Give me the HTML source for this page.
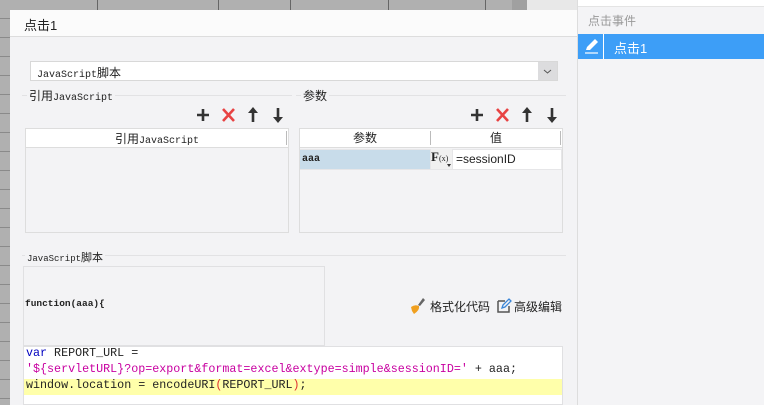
<!DOCTYPE html>
<html><head><meta charset="utf-8"><style>
*{margin:0;padding:0;box-sizing:border-box}
body{width:764px;height:405px;overflow:hidden;position:relative;background:#f3f3f5;font-family:"Liberation Sans","Noto Sans CJK SC",sans-serif;font-size:12px;color:#222}
.a{position:absolute}
.serif{font-family:"Liberation Mono","Noto Serif CJK SC",monospace;font-size:10px}
.serif b{font-family:"Noto Sans CJK SC",sans-serif;font-weight:normal;font-size:12px}
.mono{font-family:"Liberation Mono","Noto Sans CJK SC",monospace}
.vl{position:absolute;top:0;width:1px;height:10px;background:#666}
.hl{position:absolute;left:0;width:10px;height:1px;background:#8a8a8a}
</style></head><body>
<div class="a" style="left:0;top:0;width:577px;height:10px;background:#b0b0b0"></div>
<div class="a" style="left:512px;top:0;width:15px;height:10px;background:#a0a0a0"></div>
<div class="a" style="left:527px;top:0;width:50px;height:10px;background:#e8e8e8"></div>
<div class="vl" style="left:97px"></div><div class="vl" style="left:218px"></div><div class="vl" style="left:290px"></div><div class="vl" style="left:388px"></div><div class="vl" style="left:485px"></div>
<div class="a" style="left:0;top:0;width:10px;height:405px;background:#b0b0b0"></div>
<div class="hl" style="top:18px"></div><div class="hl" style="top:37px"></div><div class="hl" style="top:56px"></div><div class="hl" style="top:75px"></div><div class="hl" style="top:94px"></div><div class="hl" style="top:113px"></div><div class="hl" style="top:132px"></div><div class="hl" style="top:151px"></div><div class="hl" style="top:170px"></div><div class="hl" style="top:189px"></div><div class="hl" style="top:208px"></div><div class="hl" style="top:227px"></div><div class="hl" style="top:246px"></div><div class="hl" style="top:265px"></div><div class="hl" style="top:284px"></div><div class="hl" style="top:303px"></div><div class="hl" style="top:322px"></div><div class="hl" style="top:341px"></div><div class="hl" style="top:360px"></div><div class="hl" style="top:379px"></div><div class="hl" style="top:398px"></div>
<div class="a" style="left:10px;top:10px;width:567px;height:395px;background:#f3f3f5"></div>
<div class="a" style="left:10px;top:10px;width:567px;height:27px;background:#fbfbfb;border-bottom:1px solid #ddd"></div>
<div class="a" style="left:24px;top:15px;font-size:13px">点击1</div>
<div class="a" style="left:30px;top:61px;width:528px;height:20px;background:#fff;border:1px solid #d8d8d8"></div>
<div class="a serif" style="left:37px;top:64px">JavaScript<b>脚本</b></div>
<svg class="a" style="left:538px;top:62px" width="19" height="18"><rect width="19" height="18" fill="#dcdcde"/><path d="M6 8l3.5 3 3.5-3" stroke="#555" fill="none"/></svg>
<div class="a" style="left:22px;top:95px;width:270px;height:1px;background:#e2e2e4"></div>
<div class="a serif" style="left:27px;top:87px;background:#f3f3f5;padding:0 2px"><b>引用</b>JavaScript</div>
<div class="a" style="left:296px;top:95px;width:270px;height:1px;background:#e2e2e4"></div>
<div class="a" style="left:301px;top:87px;background:#f3f3f5;padding:0 2px;font-size:12px">参数</div>
<svg class="a" style="left:195px;top:107px" width="95" height="16"><g stroke="#333" stroke-width="2.6" fill="none"><path d="M8 2v12M2 8h12"/><path d="M58 3v12M83 1v12"/></g><g fill="#333"><path d="M58 0l5 6h-10z"/><path d="M83 16l5-6h-10z"/></g><path d="M28 2l11 12M39 2l-11 12" stroke="#e84343" stroke-width="2.6"/></svg>
<svg class="a" style="left:469px;top:107px" width="95" height="16"><g stroke="#333" stroke-width="2.6" fill="none"><path d="M8 2v12M2 8h12"/><path d="M58 3v12M83 1v12"/></g><g fill="#333"><path d="M58 0l5 6h-10z"/><path d="M83 16l5-6h-10z"/></g><path d="M28 2l11 12M39 2l-11 12" stroke="#e84343" stroke-width="2.6"/></svg>
<div class="a" style="left:25px;top:128px;width:264px;height:105px;border:1px solid #ddd"></div>
<div class="a serif" style="left:26px;top:129px;width:262px;height:19px;background:#fff;border-bottom:1px solid #ddd;text-align:center;line-height:19px"><b>引用</b>JavaScript</div>
<div class="a" style="left:286px;top:131px;width:1px;height:14px;background:#bbb"></div>
<div class="a" style="left:299px;top:128px;width:264px;height:105px;border:1px solid #ddd"></div>
<div class="a" style="left:300px;top:129px;width:262px;height:19px;background:#fff;border-bottom:1px solid #ddd"></div>
<div class="a" style="left:300px;top:129px;width:130px;text-align:center;line-height:19px">参数</div>
<div class="a" style="left:430px;top:131px;width:1px;height:14px;background:#bbb"></div>
<div class="a" style="left:431px;top:129px;width:130px;text-align:center;line-height:19px">值</div>
<div class="a" style="left:560px;top:131px;width:1px;height:14px;background:#bbb"></div>
<div class="a" style="left:300px;top:149px;width:262px;height:21px;background:#e6e6e8"></div>
<div class="a serif" style="left:300px;top:150px;width:130px;height:19px;background:#c8dcea;font-weight:bold;line-height:19px;padding-left:2px">aaa</div>
<div class="a" style="left:431px;top:149px;width:21px;height:20px;background:#f0f0f0;font-family:'Liberation Serif',serif;font-size:13px;font-weight:bold">F<span style="font-size:8px;font-weight:normal">(x)</span></div>
<div class="a" style="left:447px;top:164px;width:0;height:0;border-left:2px solid transparent;border-right:2px solid transparent;border-top:3px solid #333"></div>
<div class="a" style="left:453px;top:150px;width:108px;height:19px;background:#fff;font-size:12px;line-height:19px;padding-left:3px">=sessionID</div>
<div class="a" style="left:22px;top:255px;width:544px;height:1px;background:#e2e2e4"></div>
<div class="a serif" style="left:25px;top:249px;background:#f3f3f5;padding:0 2px;font-size:9px">JavaScript<b style="font-size:11px">脚本</b></div>
<div class="a" style="left:23px;top:266px;width:302px;height:80px;border:1px solid #e0e0e2"></div>
<div class="a serif" style="left:25px;top:298px;font-size:9.5px;font-weight:bold">function(aaa){</div>
<svg class="a" style="left:409px;top:297px" width="18" height="18" viewBox="0 0 18 18"><path d="M14 1 L16 3 L11 9 L9 8Z" fill="#666"/><path d="M2 10 Q6 7 10 9 Q11 13 5 17 L3 14 Z" fill="#f0a020"/></svg>
<div class="a" style="left:430px;top:298px;font-size:12px">格式化代码</div>
<svg class="a" style="left:497px;top:298px" width="15" height="15" viewBox="0 0 15 15"><path d="M1 3h7M1 3v11h11v-6" stroke="#555" stroke-width="1.5" fill="none"/><path d="M5 10l1-3 6-6 2 2-6 6z" stroke="#3a86d8" stroke-width="1.3" fill="none"/></svg>
<div class="a" style="left:514px;top:298px;font-size:12px">高级编辑</div>
<div class="a" style="left:23px;top:346px;width:540px;height:59px;background:#fff;border:1px solid #e0e0e2"></div>
<div class="a" style="left:24px;top:379px;width:538px;height:16px;background:#ffffaa"></div>
<div class="a mono" style="left:26px;top:345px;font-size:11.7px;line-height:16px;white-space:pre;color:#222"><span style="color:#0000c0">var</span> REPORT_URL =
<span style="color:#c800a0">'${servletURL}?op=export&amp;format=excel&amp;extype=simple&amp;sessionID='</span> + aaa;
window.location = encodeURI<span style="color:#e03030">(</span>REPORT_URL<span style="color:#e03030">)</span>;</div>
<div class="a" style="left:577px;top:0;width:187px;height:405px;background:#f4f4f6;border-left:1px solid #ddd"></div>
<div class="a" style="left:578px;top:0;width:186px;height:7px;background:#fff;border-bottom:1px solid #e4e4e4"></div>
<div class="a" style="left:588px;top:12px;font-size:12px;color:#999">点击事件</div>
<div class="a" style="left:578px;top:34px;width:186px;height:25px;background:#3d9ef7"></div>
<div class="a" style="left:603px;top:34px;width:1px;height:25px;background:#fff"></div>
<svg class="a" style="left:583px;top:37px" width="18" height="18" viewBox="0 0 18 18"><path d="M3 13 L4 10 L12 2 L15 5 L7 13 Z" fill="#fff"/><path d="M2 16h13" stroke="#fff" stroke-width="1.2"/></svg>
<div class="a" style="left:614px;top:38px;font-size:13px;color:#fff">点击1</div>
</body></html>
